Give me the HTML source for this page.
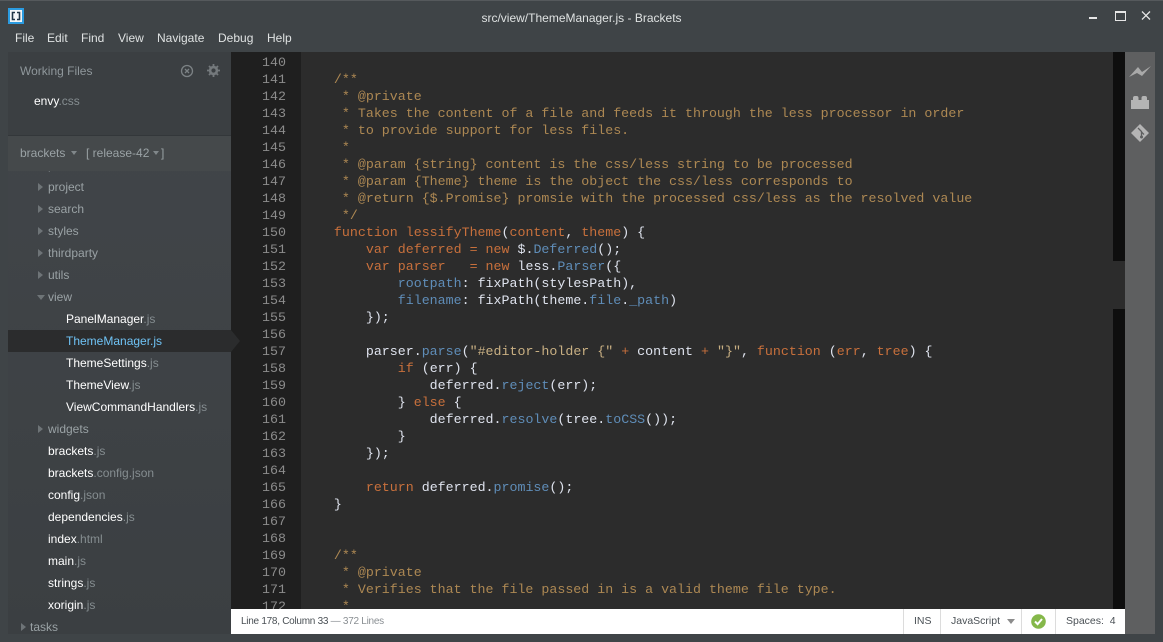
<!DOCTYPE html>
<html><head><meta charset="utf-8">
<style>
html,body{margin:0;padding:0;width:1163px;height:642px;overflow:hidden;background:#3f4447}
body{position:relative;font-family:"Liberation Sans",sans-serif;font-size:12px}
.a{position:absolute}
.m{top:31px;line-height:14px;color:#dfe2e2;font-size:12px;white-space:nowrap}
#side{left:8px;top:52px;width:223px;height:582px;background:linear-gradient(#42464a,#3b3f42);overflow:hidden}
#wf{left:0;top:0;width:223px;height:83px;background:#3b3f42}
#hd{left:0;top:83px;width:223px;height:36px;background:#45494b;border-top:1px solid #33373a;box-sizing:border-box}
.r{left:0;width:223px;height:22px;line-height:22px;white-space:nowrap;color:#fff;box-sizing:border-box}
.r i{font-style:normal;color:#858d90}
.f{color:#9aa2a5}
.t{position:absolute;width:0;height:0}
.tr{border-left:5px solid #6e7477;border-top:4px solid transparent;border-bottom:4px solid transparent;top:7px}
.td{border-top:5px solid #6e7477;border-left:4px solid transparent;border-right:4px solid transparent;top:9px}
#gut{left:231px;top:52px;width:70px;height:557px;background:#1f1f1f;overflow:hidden}
#gut pre,#code pre{margin:0;font-family:"Liberation Mono",monospace;font-size:13.3px;line-height:17px}
#gut pre{position:absolute;top:2px;right:15px;text-align:right;color:#8c8c8c}
#code{left:301px;top:52px;width:812px;height:557px;background:#2c2c2c;overflow:hidden}
#code pre{position:absolute;left:1px;top:19px;color:#dfe3ee}
.c{color:#ad8853}.k{color:#c8703c}.p{color:#5f8db8}.s{color:#c9b083}
#sb{left:1113px;top:52px;width:12px;height:557px;background:#0e0e0e}
#th{left:1113px;top:261px;width:12px;height:48px;background:#2c2c2c}
#tb{left:1125px;top:52px;width:30px;height:582px;background:#5e5f60}
#st{left:231px;top:609px;width:894px;height:25px;background:#fff;color:#4a5055;font-size:10.5px;line-height:25px;white-space:nowrap}
.v{position:absolute;top:0;width:1px;height:25px;background:#dcdcdc}
</style></head><body>

<div class="a" style="left:0;top:0;width:1163px;height:1px;background:#55595c"></div>
<svg class="a" style="left:8px;top:8px" width="16" height="16" viewBox="0 0 16 16"><rect width="16" height="16" fill="#2b9be0"/><rect x="2" y="2" width="12" height="12" fill="#f2f6f8"/><path d="M7 4.500H4.500v7H7M9 4.500h2.500v7H9" stroke="#1d3447" stroke-width="1.600" fill="none"/></svg>
<div class="a" style="left:0;width:1163px;top:11px;line-height:14px;text-align:center;color:#dfe2e2;font-size:12px">src/view/ThemeManager.js - Brackets</div>
<div class="a m" style="left:15px">File</div>
<div class="a m" style="left:47px">Edit</div>
<div class="a m" style="left:81px">Find</div>
<div class="a m" style="left:118px">View</div>
<div class="a m" style="left:157px">Navigate</div>
<div class="a m" style="left:218px">Debug</div>
<div class="a m" style="left:267px">Help</div>

<div class="a" style="left:1089px;top:17px;width:8px;height:2px;background:#e6e6e6"></div>
<div class="a" style="left:1115px;top:11px;width:9px;height:7px;border:1px solid #e6e6e6;border-top-width:2px"></div>
<svg class="a" style="left:1141px;top:11px" width="10" height="9" viewBox="0 0 10 9"><path d="M1 .500L9 8.500M9 .500L1 8.500" stroke="#e6e6e6" stroke-width="1.300"/></svg>

<div class="a" id="side">
 <div class="a" id="wf"></div>
 <div class="a" style="left:12px;top:11px;line-height:16px;color:#8f979b">Working Files</div>
 <svg class="a" style="left:172px;top:12px" width="14" height="14" viewBox="0 0 14 14"><circle cx="7" cy="7" r="5.500" fill="none" stroke="#7c8285" stroke-width="1.300"/><path d="M5 5l4 4M9 5l-4 4" stroke="#7c8285" stroke-width="1.300"/></svg>
 <svg class="a" style="left:199px;top:12px" width="13" height="13" viewBox="0 0 13 13"><circle cx="6.500" cy="6.500" r="3.400" fill="none" stroke="#74797c" stroke-width="2.600"/><path d="M6.500 0v2.500M6.500 10.500V13M0 6.500h2.500M10.500 6.500H13M2 2l1.700 1.700M9.300 9.300L11 11M11 2L9.300 3.700M3.700 9.300L2 11" stroke="#74797c" stroke-width="1.800"/></svg>
 <div class="a r" style="top:38px;padding-left:26px">envy<i>.css</i></div>

 <div class="a r f" style="top:102px;padding-left:40px">preferences</div>
 <div class="a r f" style="top:124px;padding-left:40px">project<span class="t tr" style="left:30px"></span></div>
 <div class="a r f" style="top:146px;padding-left:40px">search<span class="t tr" style="left:30px"></span></div>
 <div class="a r f" style="top:168px;padding-left:40px">styles<span class="t tr" style="left:30px"></span></div>
 <div class="a r f" style="top:190px;padding-left:40px">thirdparty<span class="t tr" style="left:30px"></span></div>
 <div class="a r f" style="top:212px;padding-left:40px">utils<span class="t tr" style="left:30px"></span></div>
 <div class="a r f" style="top:234px;padding-left:40px">view<span class="t td" style="left:29px"></span></div>
 <div class="a r" style="top:256px;padding-left:58px">PanelManager<i>.js</i></div>
 <div class="a r" style="top:278px;padding-left:58px;background:#2b2c2d;color:#6fc3f5">ThemeManager.js</div>
 <div class="a r" style="top:300px;padding-left:58px">ThemeSettings<i>.js</i></div>
 <div class="a r" style="top:322px;padding-left:58px">ThemeView<i>.js</i></div>
 <div class="a r" style="top:344px;padding-left:58px">ViewCommandHandlers<i>.js</i></div>
 <div class="a r f" style="top:366px;padding-left:40px">widgets<span class="t tr" style="left:30px"></span></div>
 <div class="a r" style="top:388px;padding-left:40px">brackets<i>.js</i></div>
 <div class="a r" style="top:410px;padding-left:40px">brackets<i>.config.json</i></div>
 <div class="a r" style="top:432px;padding-left:40px">config<i>.json</i></div>
 <div class="a r" style="top:454px;padding-left:40px">dependencies<i>.js</i></div>
 <div class="a r" style="top:476px;padding-left:40px">index<i>.html</i></div>
 <div class="a r" style="top:498px;padding-left:40px">main<i>.js</i></div>
 <div class="a r" style="top:520px;padding-left:40px">strings<i>.js</i></div>
 <div class="a r" style="top:542px;padding-left:40px">xorigin<i>.js</i></div>
 <div class="a r f" style="top:564px;padding-left:22px">tasks<span class="t tr" style="left:13px"></span></div>

 <div class="a" id="hd">
  <div class="a" style="left:12px;top:9px;line-height:16px;color:#9aa2a5;white-space:nowrap">brackets</div>
  <span class="t" style="left:63px;top:15px;border-top:4px solid #80878a;border-left:3px solid transparent;border-right:3px solid transparent"></span>
  <div class="a" style="left:78px;top:9px;line-height:16px;color:#9aa2a5;white-space:nowrap">[ release-42</div>
  <span class="t" style="left:145px;top:15px;border-top:4px solid #80878a;border-left:3px solid transparent;border-right:3px solid transparent"></span>
  <div class="a" style="left:153px;top:9px;line-height:16px;color:#9aa2a5">]</div>
 </div>
</div>
<div class="a" style="left:231px;top:330px;width:0;height:0;border-left:9px solid #2b2c2d;border-top:11px solid transparent;border-bottom:11px solid transparent;z-index:3"></div>

<div class="a" id="gut"><pre>140
141
142
143
144
145
146
147
148
149
150
151
152
153
154
155
156
157
158
159
160
161
162
163
164
165
166
167
168
169
170
171
172
173</pre></div>

<div class="a" id="code"><pre>    <span class="c">/**</span>
<span class="c">     * @private</span>
<span class="c">     * Takes the content of a file and feeds it through the less processor in order</span>
<span class="c">     * to provide support for less files.</span>
<span class="c">     *</span>
<span class="c">     * @param {string} content is the css/less string to be processed</span>
<span class="c">     * @param {Theme} theme is the object the css/less corresponds to</span>
<span class="c">     * @return {$.Promise} promsie with the processed css/less as the resolved value</span>
<span class="c">     */</span>
    <span class="k">function lessifyTheme</span>(<span class="k">content</span>, <span class="k">theme</span>) {
        <span class="k">var deferred</span> <span class="k">= new</span> $.<span class="p">Deferred</span>();
        <span class="k">var parser</span>   <span class="k">= new</span> less.<span class="p">Parser</span>({
            <span class="p">rootpath</span>: fixPath(stylesPath),
            <span class="p">filename</span>: fixPath(theme.<span class="p">file</span>.<span class="p">_path</span>)
        });

        parser.<span class="p">parse</span>(<span class="s">"#editor-holder {"</span> <span class="k">+</span> content <span class="k">+</span> <span class="s">"}"</span>, <span class="k">function</span> (<span class="k">err</span>, <span class="k">tree</span>) {
            <span class="k">if</span> (err) {
                deferred.<span class="p">reject</span>(err);
            } <span class="k">else</span> {
                deferred.<span class="p">resolve</span>(tree.<span class="p">toCSS</span>());
            }
        });

        <span class="k">return</span> deferred.<span class="p">promise</span>();
    }


    <span class="c">/**</span>
<span class="c">     * @private</span>
<span class="c">     * Verifies that the file passed in is a valid theme file type.</span>
<span class="c">     *</span></pre></div>

<div class="a" id="sb"></div>
<div class="a" id="th"></div>
<div class="a" id="tb">
 <svg class="a" style="left:4px;top:14px" width="22" height="11" viewBox="0 0 22 11"><path d="M0 11L9 1l4 5 9-6-9 10-5-3z" fill="#a9a9a9"/></svg>
 <svg class="a" style="left:6px;top:44px" width="18" height="13" viewBox="0 0 18 13"><path d="M0 4h2V2a2 2 0 0 1 2-2h1.500a2 2 0 0 1 2 2V4h3V2a2 2 0 0 1 2-2H14a2 2 0 0 1 2 2V4h2v9H0z" fill="#b4b4b4"/></svg>
 <svg class="a" style="left:6px;top:72px" width="18" height="18" viewBox="0 0 18 18"><path d="M9 0l9 9-9 9-9-9z" fill="#b4b4b4"/><path d="M7 4l3.500 3.500V12M10.500 8l2.500 2.500" stroke="#5e5f60" stroke-width="1.300" fill="none"/><circle cx="10.500" cy="13" r="1.500" fill="#5e5f60"/></svg>
</div>

<div class="a" id="st">
 <div class="a" style="left:10px;font-size:10px;letter-spacing:-.27px">Line 178, Column 33 <span style="color:#8a8f93">— 372 Lines</span></div>
 <div class="v" style="left:672px"></div>
 <div class="a" style="left:683px">INS</div>
 <div class="v" style="left:709px"></div>
 <div class="a" style="left:720px">JavaScript</div>
 <span class="t" style="left:776px;top:10px;border-top:5px solid #8c8c8c;border-left:4px solid transparent;border-right:4px solid transparent"></span>
 <div class="v" style="left:790px"></div>
 <svg class="a" style="left:800px;top:5px" width="15" height="15" viewBox="0 0 15 15"><circle cx="7.500" cy="7.500" r="7.300" fill="#85b84a"/><path d="M4 7.500l2.600 2.600L11 5" stroke="#fff" stroke-width="2" fill="none"/></svg>
 <div class="v" style="left:824px"></div>
 <div class="a" style="left:835px">Spaces:&nbsp; 4</div>
</div>
</body></html>
